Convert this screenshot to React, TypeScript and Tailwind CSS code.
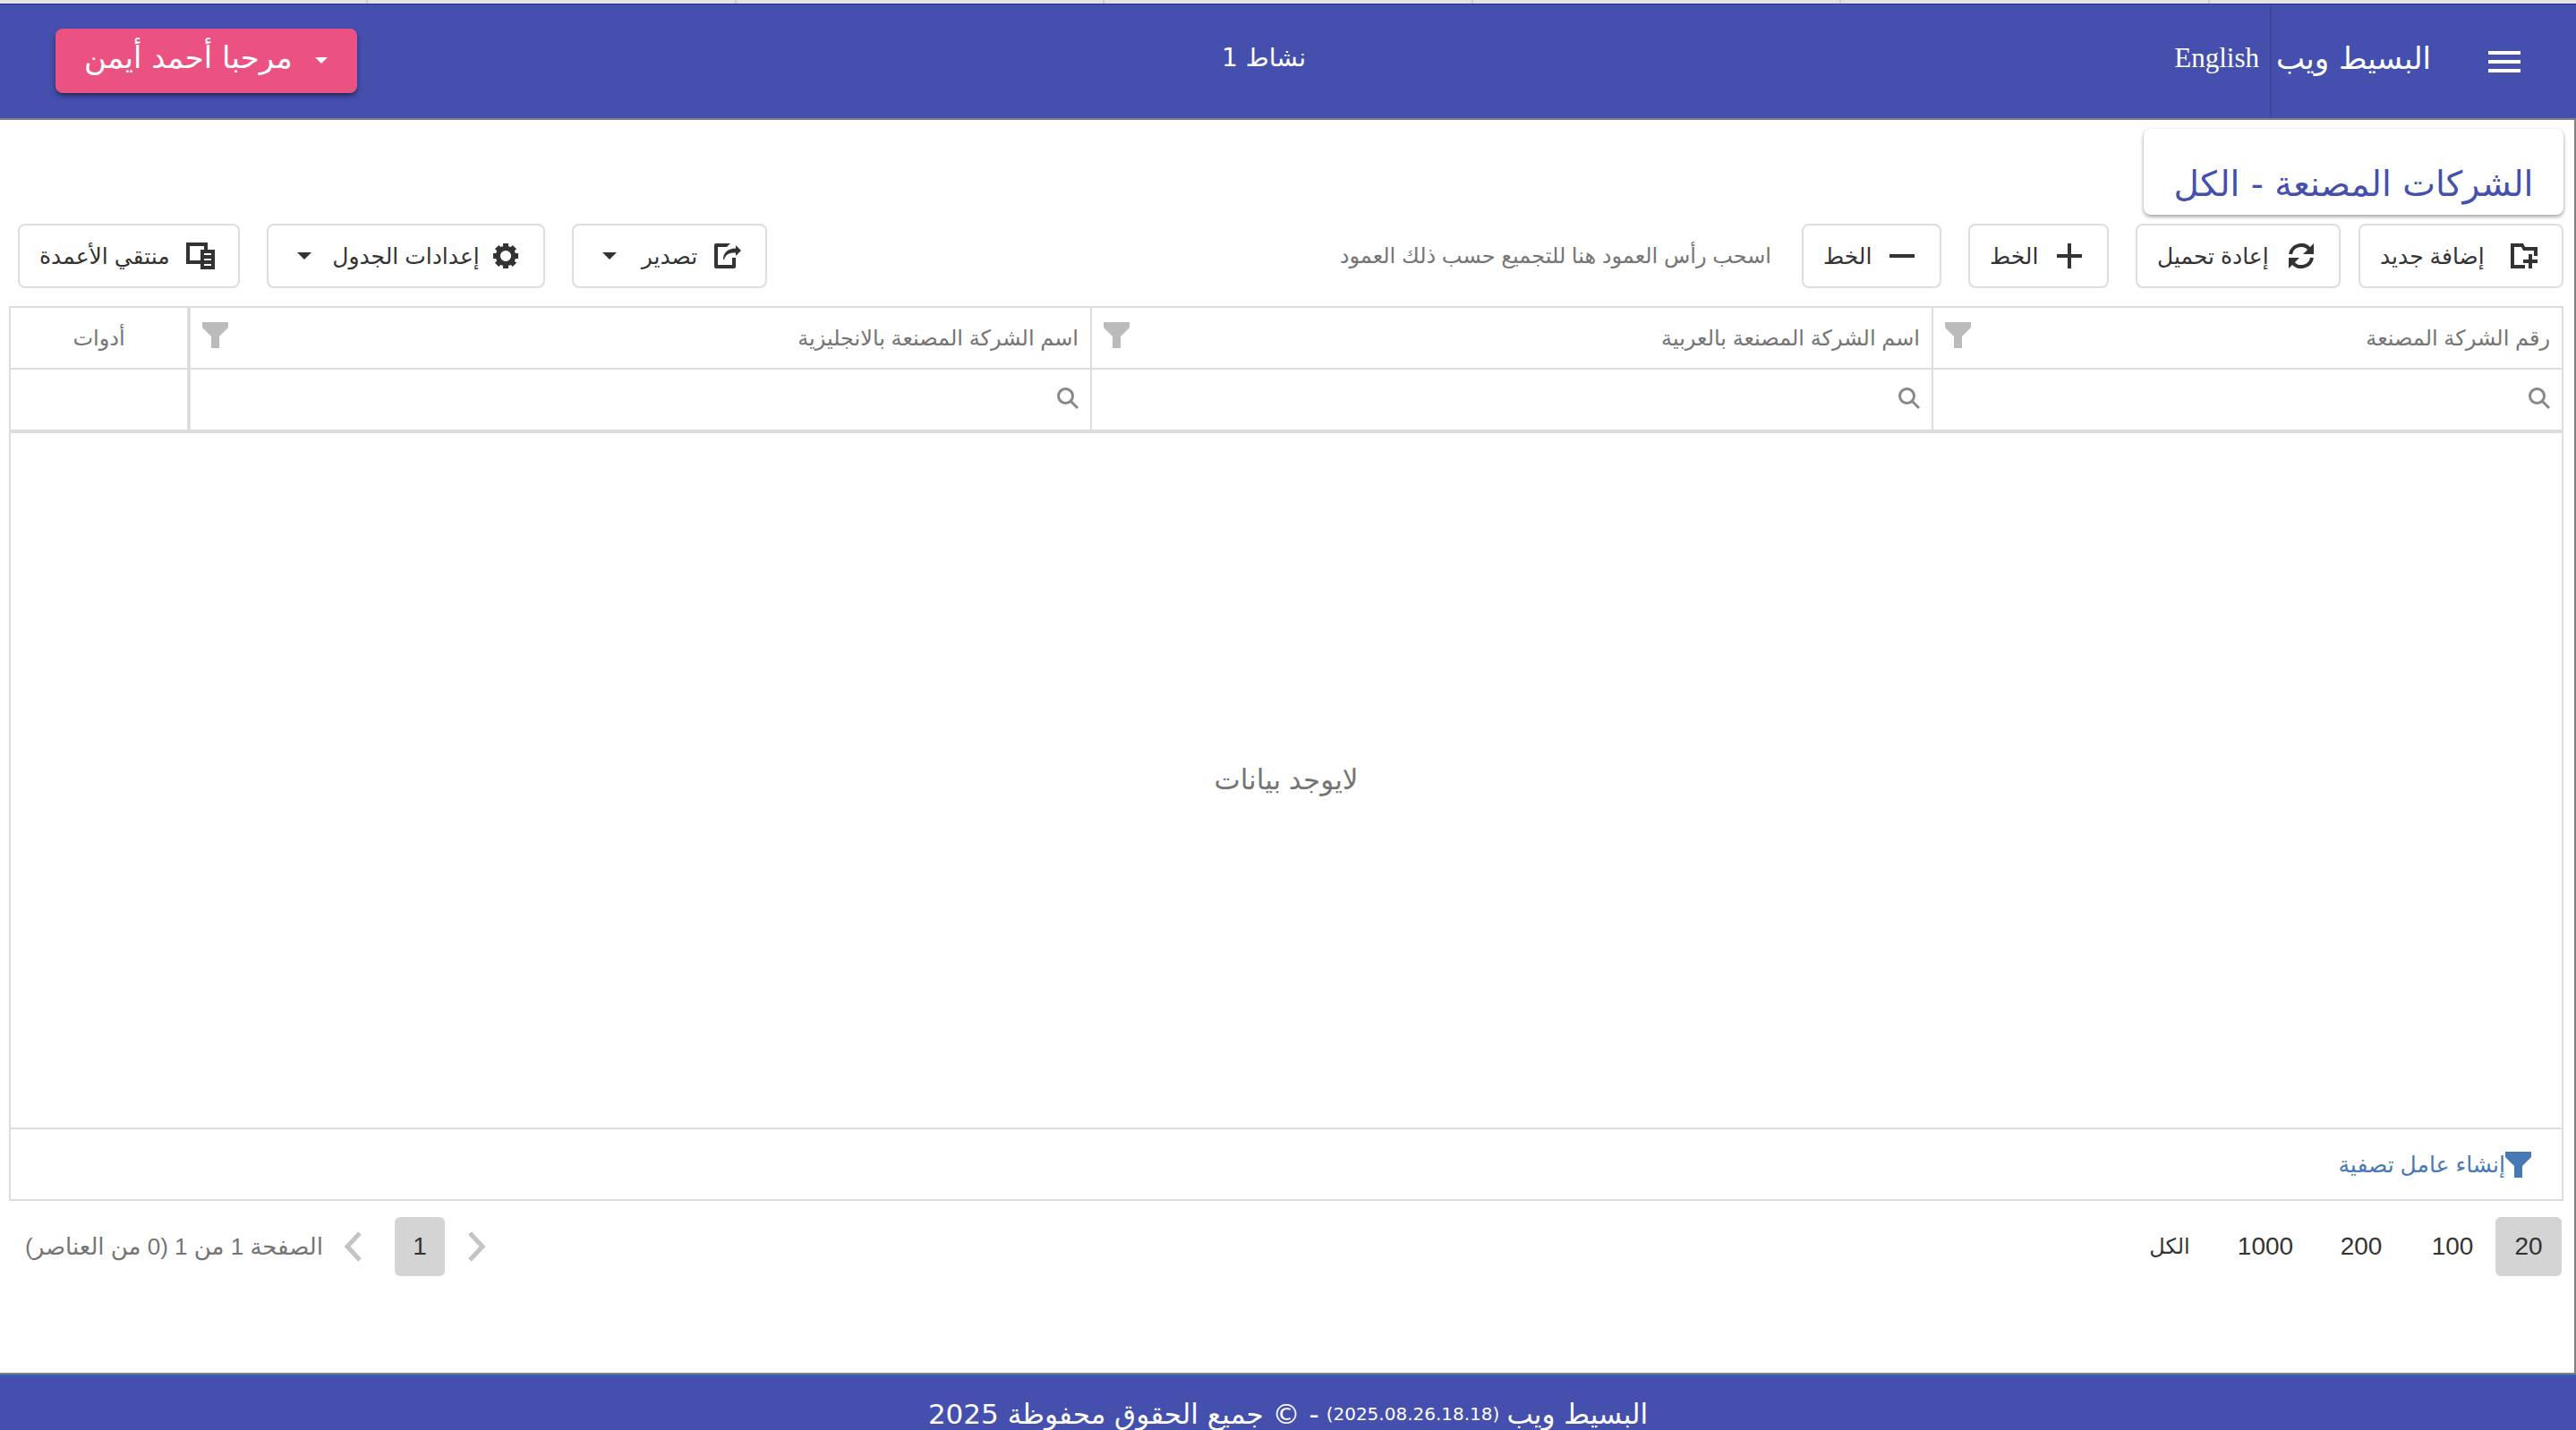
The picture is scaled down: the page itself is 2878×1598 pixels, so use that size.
import type { ReactNode } from "react";

const HEAD_FONT = "font-['DejaVu_Sans','Noto_Sans',sans-serif]";

function PlusIcon() {
  return (
    <svg width="28" height="28" viewBox="0 0 28 28" fill="currentColor" aria-hidden="true">
      <path d="M12 0h4v12h12v4H16v12h-4V16H0v-4h12z" />
    </svg>
  );
}

function MinusIcon() {
  return (
    <svg width="28" height="28" viewBox="0 0 28 28" fill="currentColor" aria-hidden="true">
      <path d="M0 12h28v4H0z" />
    </svg>
  );
}

function AddFolderIcon() {
  return (
    <svg width="30" height="28" viewBox="0 0 30 28" fill="currentColor" aria-hidden="true">
      <path d="M0 0H14L16 4H30V14H26V8H14L12 4H4V24H16V28H0Z" />
      <path d="M20 12h4v6h6v4h-6v6h-4v-6h-6v-4h6z" />
    </svg>
  );
}

function ReloadIcon() {
  return (
    <svg width="28" height="28" viewBox="0 0 28 28" aria-hidden="true">
      <g fill="none" stroke="currentColor" strokeWidth="4">
        <path d="M2 12A12.2 12.2 0 0 1 23.5 6.5" />
        <path d="M26 16A12.2 12.2 0 0 1 4.5 21.5" />
      </g>
      <path d="M28 0V12H16ZM0 28V16H12Z" fill="currentColor" />
    </svg>
  );
}

function ExportIcon() {
  return (
    <svg width="30" height="28" viewBox="0 0 30 28" fill="currentColor" aria-hidden="true">
      <path d="M2 0H18L14 4H4V24H20V16H24V26A2 2 0 0 1 22 28H2A2 2 0 0 1 0 26V2A2 2 0 0 1 2 0Z" />
      <path d="M10 18C10 10 15 6 24 5.500V2L30 8L24 14V10.500C17 10 13 12 11 18Z" />
    </svg>
  );
}

function GearIcon() {
  return (
    <svg width="28" height="28" viewBox="0 0 28 28" aria-hidden="true">
      <circle cx="14" cy="14" r="8.700" fill="none" stroke="currentColor" strokeWidth="5.200" />
      <g fill="currentColor">
        {[0, 45, 90, 135].map((a) => (
          <g key={a} transform={`rotate(${a} 14 14)`}>
            <rect x="11" y="0" width="6" height="5" />
            <rect x="11" y="23" width="6" height="5" />
          </g>
        ))}
      </g>
    </svg>
  );
}

function ColumnChooserIcon() {
  return (
    <svg width="32" height="30" viewBox="0 0 32 30" fill="currentColor" aria-hidden="true">
      <path d="M0 0H24V8H20V4H4V20H16V24H0Z" />
      <path fillRule="evenodd" d="M16 8H32V30H16ZM20 12V14H28V12ZM20 18V20H28V18ZM20 24V26H28V24Z" />
    </svg>
  );
}

function Caret() {
  return (
    <svg width="16" height="8" viewBox="0 0 16 8" fill="currentColor" aria-hidden="true">
      <path d="M0 0H16L8 8Z" />
    </svg>
  );
}

function FunnelIcon() {
  return (
    <svg width="29" height="29" viewBox="0 0 29 29" fill="currentColor" aria-hidden="true">
      <path d="M0 0H29V6L19 16V29H10V16L0 6Z" />
    </svg>
  );
}

function SearchIcon() {
  return (
    <svg width="24" height="24" viewBox="0 0 24 24" fill="none" stroke="currentColor" strokeWidth="3" aria-hidden="true">
      <circle cx="9.500" cy="9.500" r="8" />
      <path d="M15 15L23 23" />
    </svg>
  );
}

function Chevron({ d }: { d: string }) {
  return (
    <svg width="19" height="34" viewBox="0 0 19 34" fill="none" stroke="currentColor" strokeWidth="5" aria-hidden="true">
      <path d={d} />
    </svg>
  );
}

function ToolButton({ icon, label, width, caret }: { icon: ReactNode; label: string; width: string; caret?: boolean }) {
  return (
    <button
      type="button"
      className={`flex h-[72px] shrink-0 items-center justify-between whitespace-nowrap rounded-lg border-2 border-[#dddddd] bg-white pr-[26px] pl-[22px] text-[25px] text-[#333333] ${width}`}
    >
      <span className="flex w-8 justify-center">{icon}</span>
      <span>{label}</span>
      {caret && (
        <span className="px-[10px]">
          <Caret />
        </span>
      )}
    </button>
  );
}

const columns = [
  { label: "رقم الشركة المصنعة", width: "" },
  { label: "اسم الشركة المصنعة بالعربية", width: "w-[940px]" },
  { label: "اسم الشركة المصنعة بالانجليزية", width: "w-[1008px]" },
];

const pageSizes = [
  { label: "20", style: "w-[74px] bg-[#d4d4d4]" },
  { label: "100", style: "w-[88px]" },
  { label: "200", style: "w-[108px]" },
  { label: "1000", style: "w-[98px]" },
  { label: "الكل", style: "w-[108px] text-[24px]" },
];

export default function App() {
  return (
    <div dir="rtl" className="flex min-h-screen flex-col bg-white font-['Liberation_Sans','DejaVu_Sans',sans-serif] text-[24px] leading-8 text-[#333333]">
      <div className="flex h-1 bg-[#e3e3e1]">
        {[0, 1, 2, 3, 4, 5, 6].map((n) => (
          <span key={n} className="flex-1 border-l-2 border-[#cfcfcf] last:border-0" />
        ))}
      </div>
      <header className={`flex h-[130px] items-stretch justify-between border-t border-b-2 border-t-[#1f2f8f] border-b-[#808080] bg-[#444fae] text-white ${HEAD_FONT}`}>
        <div className="flex flex-1 items-stretch">
          <button type="button" aria-label="القائمة" className="mr-[62px] flex items-center">
            <svg width="36" height="24" viewBox="0 0 36 24" fill="currentColor" aria-hidden="true">
              <path d="M0 0h36v4H0zM0 10h36v4H0zM0 20h36v4H0z" />
            </svg>
          </button>
          <a href="#home" className="mr-16 flex w-[180px] items-center border-l-2 border-[#3d479d] pb-2 text-[34px] whitespace-nowrap">البسيط ويب</a>
          <a href="#en" className="mr-3 flex items-center pb-2 font-['Liberation_Serif',serif] text-[31px]">English</a>
        </div>
        <div className="mr-[54px] flex items-center pb-2 text-[28px]">نشاط 1</div>
        <div className="flex flex-1 items-start justify-end">
          <button type="button" className="mt-[27px] ml-[62px] flex h-[72px] w-[337px] items-center justify-between rounded-lg bg-[#ec5281] px-8 text-[34px] whitespace-nowrap shadow-md shadow-black/40">
            <svg width="16" height="8" viewBox="0 0 16 8" fill="currentColor" aria-hidden="true">
              <path d="M1 0H15L8 7Z" />
            </svg>
            <span className="pb-2">مرحبا أحمد أيمن</span>
          </button>
        </div>
      </header>

      <main className="flex flex-1 flex-col border-r-2 border-[#808080] pr-3 pl-[10px]">
        <h1 className={`mt-[10px] flex h-24 w-[469px] items-end justify-center rounded-lg pb-3 text-[39px] leading-[44px] whitespace-nowrap text-[#444fae] shadow-[0_2px_4px_rgba(0,0,0,0.4)] ${HEAD_FONT}`}>
          الشركات المصنعة - الكل
        </h1>

        <div className="mt-[10px] flex items-center pl-[10px]">
          <ToolButton icon={<AddFolderIcon />} label="إضافة جديد" width="w-[229px]" />
          <div className="mr-5 flex gap-[30px]">
            <ToolButton icon={<ReloadIcon />} label="إعادة تحميل" width="w-[229px]" />
            <ToolButton icon={<PlusIcon />} label="الخط" width="w-[157px]" />
            <ToolButton icon={<MinusIcon />} label="الخط" width="w-[156px]" />
          </div>
          <p className="mr-[34px] flex-1 text-[#757575]">اسحب رأس العمود هنا للتجميع حسب ذلك العمود</p>
          <div className="flex gap-[30px]">
            <ToolButton icon={<ExportIcon />} label="تصدير" width="w-[218px]" caret />
            <ToolButton icon={<GearIcon />} label="إعدادات الجدول" width="w-[311px]" caret />
            <ToolButton icon={<ColumnChooserIcon />} label="منتقي الأعمدة" width="w-[248px]" />
          </div>
        </div>

        <section className="mt-5 flex flex-col border-2 border-[#dddddd]">
          <table className="w-full table-fixed border-collapse">
            <thead>
              <tr className="h-[68px] border-b-2 border-[#dddddd] text-[#757575]">
                {columns.map((c) => (
                  <th key={c.label} className={`border-l-2 border-[#dddddd] px-[13px] text-right font-normal ${c.width}`}>
                    <div className="flex items-center justify-between">
                      <span>{c.label}</span>
                      <button type="button" aria-label={`تصفية ${c.label}`} className="pb-[6px] text-[#bbbbbb]">
                        <FunnelIcon />
                      </button>
                    </div>
                  </th>
                ))}
                <th className="w-[199px] border-r-4 border-[#dddddd] text-center font-normal">أدوات</th>
              </tr>
            </thead>
            <tbody>
              <tr className="h-[70px] border-b-4 border-[#dddddd]">
                {columns.map((c) => (
                  <td key={c.label} className="border-l-2 border-[#dddddd] px-[13px]">
                    <label className="flex items-center gap-3 pb-1 text-[#888888]">
                      <SearchIcon />
                      <input type="text" aria-label={c.label} className="min-w-0 flex-1 bg-transparent text-[#333333] outline-none" />
                    </label>
                  </td>
                ))}
                <td className="border-r-4 border-[#dddddd]" />
              </tr>
            </tbody>
          </table>
          <div className="flex h-[776px] items-center justify-center text-[31px] text-[#757575]">لايوجد بيانات</div>
          <div className="flex h-20 items-center border-t-2 border-[#dddddd] pr-[34px]">
            <button type="button" className="flex items-center text-[25px] text-[#4679b5]">
              <FunnelIcon />
              <span>إنشاء عامل تصفية</span>
            </button>
          </div>
        </section>

        <nav aria-label="الصفحات" className="mt-[18px] flex items-center justify-between pr-[2px] pl-[18px]">
          <div className="flex gap-1 text-[28px]">
            {pageSizes.map((p) => (
              <button key={p.label} type="button" className={`h-[66px] rounded-md ${p.style}`}>
                {p.label}
              </button>
            ))}
          </div>
          <div className="flex items-center">
            <button type="button" aria-label="السابق" className="text-[#c4c4c4]">
              <Chevron d="M2 2L16 17L2 32" />
            </button>
            <button type="button" className="mr-[26px] h-[66px] w-14 rounded-md bg-[#d4d4d4] text-[28px]">1</button>
            <button type="button" aria-label="التالي" className="mr-[37px] text-[#c4c4c4]">
              <Chevron d="M17 2L3 17L17 32" />
            </button>
            <span className="mr-6 text-[26px] whitespace-nowrap text-[#757575]">الصفحة 1 من 1 (0 من العناصر)</span>
          </div>
        </nav>
      </main>

      <footer className={`border-t-2 border-[#808080] text-[31px] leading-9 text-white ${HEAD_FONT}`}>
        <p className="flex h-[62px] items-end justify-center gap-2 border-t-2 border-[#2f62b5] bg-[#444fae]">
          <span>البسيط ويب</span>
          <span className="text-[20px]">(2025.08.26.18.18)</span>
          <span>- © جميع الحقوق محفوظة 2025</span>
        </p>
      </footer>
    </div>
  );
}
